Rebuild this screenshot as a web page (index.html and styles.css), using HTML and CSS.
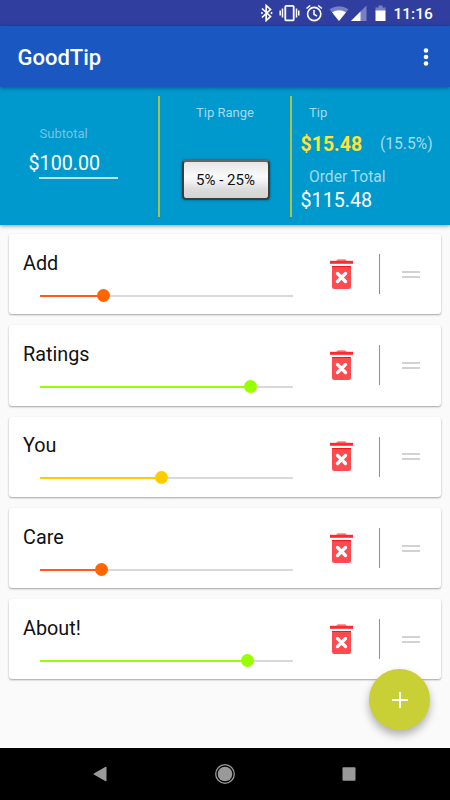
FILE: index.html
```
<!DOCTYPE html>
<html lang="en">
<head>
    <meta charset="UTF-8">
    <meta name="viewport" content="width=device-width, initial-scale=1.0">
    <title>GoodTip</title>
    <link rel="stylesheet" href="styles.css">
</head>
<body>
    <!-- Icons used more than once -->
    <svg class="defs" width="0" height="0">
        <symbol id="trash" viewBox="0 0 24 31">
            <path d="M6.500 2v-.7Q7 .2 8.500.2h6q1.500 0 2 1.100V2z" fill="#f88080"/>
            <path d="M0 1.800h23v3H0z" fill="#ff2a2e"/>
            <path d="M2 7h19v20.500q0 2.500-2.500 2.500h-14q-2.500 0-2.500-2.500z" fill="#ff4a4f"/>
            <path d="M2 7.500h19" stroke="#fb161b"/>
            <path d="M7.500 14.500l8 8M15.500 14.500l-8 8" stroke="#fff" stroke-width="3.300" stroke-linecap="round"/>
        </symbol>
    </svg>

    <div class="status-bar">
        <svg width="126" height="18" viewBox="0 0 126 18" fill="none" stroke="#fff">
            <path d="M2 4.500l8.500 8-4.300 4V1.500l4.300 4L2 13.500" stroke-width="1.700"/>
            <path d="M1.200 9h1.500M10.800 9h1.500" stroke-width="2"/>
            <rect x="25.300" y="1.800" width="8.400" height="14.600" rx="1" stroke-width="1.800"/>
            <path d="M22.500 4.500v9M36.500 4.500v9M20.200 6.500v5M38.800 6.500v5" stroke-width="1.500"/>
            <circle cx="54.200" cy="10" r="6.600" stroke-width="1.600"/>
            <path d="M54 6v4.300l3 1.800M46.500 4.500l3.700-3M61.900 4.500l-3.700-3" stroke-width="1.600"/>
            <path d="M79 17L69.500 5.300Q79-.8 88.500 5.300z" fill="#7780c4" stroke="none"/>
            <path d="M79 17L72 8.300q7-4 14 0z" fill="#fff" stroke="none"/>
            <path d="M106.500 1.500V17H91z" fill="#7780c4" stroke="none"/>
            <path d="M100.500 7.500V17H91z" fill="#fff" stroke="none"/>
            <path d="M115.500 3.500h3V1.500h4v2h3V8h-10z" fill="#7780c4" stroke="none"/>
            <path d="M115.500 6.500h10V17h-10z" fill="#fff" stroke="none"/>
        </svg>
        <span class="clock">11:16</span>
    </div>

    <div class="app-bar">
        <h1>GoodTip</h1>
        <svg width="6" height="20" viewBox="0 0 6 20" fill="#fff">
            <circle cx="3" cy="3.500" r="2.300"/>
            <circle cx="3" cy="10" r="2.300"/>
            <circle cx="3" cy="16.500" r="2.300"/>
        </svg>
    </div>

    <div class="summary">
        <div class="subtotal">
            <div class="label faded">Subtotal</div>
            <div class="amount">$<span>100.00</span></div>
            <div class="underline"></div>
        </div>
        <div class="tip-range">
            <div class="label">Tip Range</div>
            <button type="button">5% - 25%</button>
        </div>
        <div class="totals">
            <div class="label">Tip</div>
            <div class="tip-row">
                <span class="tip">$15.48</span>
                <span class="percent">(15.5%)</span>
            </div>
            <div class="total-label">Order Total</div>
            <div class="amount">$115.48</div>
        </div>
    </div>

    <div class="list">
        <div class="card low">
            <div class="rating">
                <div class="name">Add</div>
                <div class="slider"><div class="fill" style="width: 25.1%"></div></div>
            </div>
            <svg class="trash" width="24" height="31"><use href="#trash"/></svg>
            <div class="separator"></div>
            <div class="handle"></div>
        </div>
        <div class="card high">
            <div class="rating">
                <div class="name">Ratings</div>
                <div class="slider"><div class="fill" style="width: 83%"></div></div>
            </div>
            <svg class="trash" width="24" height="31"><use href="#trash"/></svg>
            <div class="separator"></div>
            <div class="handle"></div>
        </div>
        <div class="card medium">
            <div class="rating">
                <div class="name">You</div>
                <div class="slider"><div class="fill" style="width: 48%"></div></div>
            </div>
            <svg class="trash" width="24" height="31"><use href="#trash"/></svg>
            <div class="separator"></div>
            <div class="handle"></div>
        </div>
        <div class="card low">
            <div class="rating">
                <div class="name">Care</div>
                <div class="slider"><div class="fill" style="width: 24.1%"></div></div>
            </div>
            <svg class="trash" width="24" height="31"><use href="#trash"/></svg>
            <div class="separator"></div>
            <div class="handle"></div>
        </div>
        <div class="card high">
            <div class="rating">
                <div class="name">About!</div>
                <div class="slider"><div class="fill" style="width: 82%"></div></div>
            </div>
            <svg class="trash" width="24" height="31"><use href="#trash"/></svg>
            <div class="separator"></div>
            <div class="handle"></div>
        </div>

        <button type="button" class="add">
            <svg width="16" height="16" viewBox="0 0 16 16" stroke="#fff" stroke-width="2">
                <path d="M8 0v16M0 8h16"/>
            </svg>
        </button>
    </div>

    <div class="nav-bar">
        <svg width="14" height="16" viewBox="0 0 14 16" fill="#999"><path d="M12.200.9Q13.500.3 13.500 1.500v13q0 1.200-1.300.6L.8 8.600q-.7-.6 0-1.200z"/></svg>
        <svg width="22" height="22" viewBox="0 0 22 22" fill="#999">
            <circle cx="11" cy="11" r="9.300" fill="none" stroke="#999" stroke-width="1.300"/>
            <circle cx="11" cy="11" r="7.300"/>
        </svg>
        <svg width="14" height="14" viewBox="0 0 14 14" fill="#999"><rect x=".5" y=".2" width="13" height="13.600" rx="1"/></svg>
    </div>
</body>
</html>
```

FILE: styles.css
```
* {
    box-sizing: border-box;
}

body {
    margin: 0;
    height: 800px;
    display: flex;
    flex-direction: column;
    font-family: Roboto, sans-serif;
    background-color: #fafafa;
    overflow: hidden;
}

.defs {
    position: absolute;
}

.status-bar {
    height: 26px;
    display: flex;
    align-items: center;
    justify-content: flex-end;
    padding-right: 17px;
    background-color: #303f9f;
}

.clock {
    width: 39.5px;
    margin-left: 7.5px;
    padding-top: 2px;
    color: white;
    font-size: 15.5px;
    line-height: 26px;
    font-weight: 500;
    white-space: nowrap;
}

.app-bar {
    position: relative;
    z-index: 1;
    height: 61px;
    display: flex;
    align-items: center;
    justify-content: space-between;
    padding: 0 21px 0 17.5px;
    background-color: #1a57c0;
    box-shadow: 0 1px 4px rgba(0, 0, 0, 0.4);
}

h1 {
    margin: 2px 0 0;
    color: white;
    font-size: 22px;
    font-weight: 500;
}

.summary {
    height: 138px;
    display: grid;
    grid-template-columns: 158px 132px 1fr;
    padding: 9px 0 8px;
    color: white;
    background-color: #0099cd;
    box-shadow: 0 1px 4px rgba(0, 0, 0, 0.4);
}

.label {
    font-size: 13px;
    line-height: 16px;
    color: #a6daed;
}

.faded {
    color: #73c5e2;
}

.amount {
    font-size: 19.7px;
    line-height: 24px;
}

.subtotal {
    padding: 30px 0 0 28.5px;
}

.subtotal .label {
    margin-left: 11px;
    margin-bottom: 10px;
}

.underline {
    width: 79px;
    height: 2px;
    margin: 1px 0 0 10.5px;
    background-color: #b9e2f2;
}

.tip-range,
.totals {
    border-left: 2px solid #a9c34c;
}

.tip-range {
    display: flex;
    flex-direction: column;
    align-items: center;
    padding-top: 9px;
}

.tip-range button {
    width: 88px;
    height: 40px;
    margin: 39px 0 0 2px;
    padding: 0 1px 0 0;
    font-family: inherit;
    font-size: 15px;
    color: #111;
    border: 2px solid #3c3c3c;
    border-top-color: #656565;
    border-radius: 4px;
    background: linear-gradient(#e6e6e6, #fafafa 40%, #f0f0f0 55%, #dcdcdc 75%, #d4d4d4);
    box-shadow: 0 0 3px rgba(0, 0, 0, 0.4);
}

.totals {
    padding: 9px 0 0 8.5px;
}

.totals .label,
.total-label {
    margin-left: 8.5px;
}

.tip-row {
    display: flex;
    align-items: center;
    height: 24px;
    margin-top: 11px;
}

.tip {
    width: 79.5px;
    font-size: 19.5px;
    font-weight: 700;
    color: #ffe433;
}

.percent {
    font-size: 15.6px;
    color: #a6daed;
}

.total-label {
    margin-top: 11px;
    font-size: 15.6px;
    line-height: 20px;
    color: #a6daed;
}

.totals .amount {
    margin-top: 2px;
}

.list {
    position: relative;
    flex: 1;
    display: flex;
    flex-direction: column;
    gap: 11px;
    padding: 9px 9px 0;
}

.card {
    height: 80.3px;
    display: flex;
    align-items: center;
    background-color: white;
    border-radius: 3px;
    box-shadow: 0 1px 2px rgba(0, 0, 0, 0.35);
}

.low {
    color: #ff6600;
}

.medium {
    color: #ffcc00;
}

.high {
    color: #99ff00;
}

.rating {
    width: 285px;
    padding: 1px 0 0 14px;
}

.name {
    color: #111;
    font-size: 19.8px;
    line-height: 25px;
}

.slider {
    width: 253px;
    height: 2px;
    margin: 19px 0 2px 17.4px;
    background-color: #d9d9d9;
}

.fill {
    position: relative;
    height: 2px;
    background-color: currentColor;
}

.low .fill {
    background-color: #ff5a1a;
}

/* Slider thumb */
.fill::after {
    content: "";
    position: absolute;
    top: -6px;
    right: -6.5px;
    width: 13px;
    height: 13px;
    border-radius: 50%;
    background-color: currentColor;
}

.trash {
    margin-left: 36px;
}

.separator {
    width: 1px;
    height: 40px;
    margin-left: 25px;
    background-color: #8f8f8f;
}

.handle {
    width: 18px;
    height: 7px;
    margin-left: 22px;
    border: solid #d2d2d2;
    border-width: 2px 0;
}

.add {
    position: absolute;
    right: 19.7px;
    bottom: 18px;
    width: 61px;
    height: 61px;
    display: flex;
    align-items: center;
    justify-content: center;
    padding: 0;
    border: none;
    border-radius: 50%;
    background-color: #c8d035;
    box-shadow: 0 5px 9px rgba(0, 0, 0, 0.3);
}

.nav-bar {
    position: relative;
    height: 52px;
    display: flex;
    align-items: center;
    justify-content: space-between;
    padding: 0 94px 0 93px;
    background-color: black;
}
```
